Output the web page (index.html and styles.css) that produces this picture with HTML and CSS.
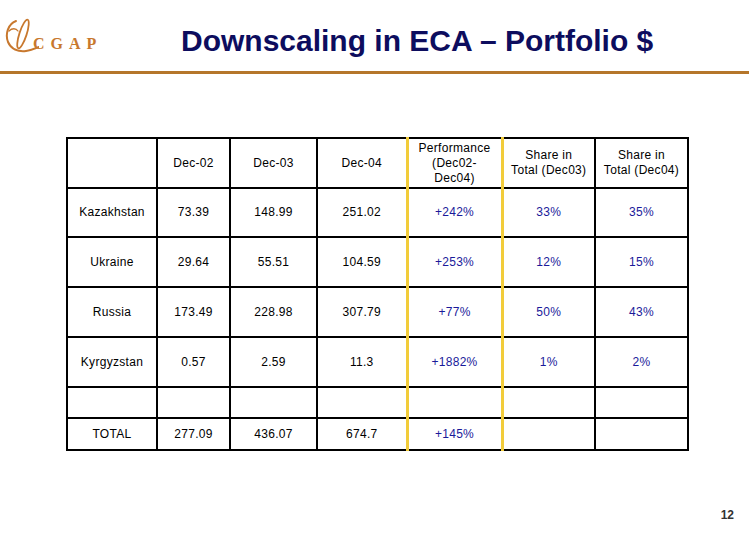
FILE: index.html
```html
<!DOCTYPE html>
<html>
<head>
<meta charset="utf-8">
<link rel="stylesheet" href="styles.css">
</head>
<body>
<div class="slide">
  <header class="header">
    <div class="logo">
      <svg class="logo-mark" width="34" height="36" viewBox="0 0 34 36">
        <path d="M11 4 C3 7 0 17 3 25 C6 32 13 35 21 34 C25 33.5 29 32 34 30" fill="none" stroke="#c8782e" stroke-width="2" stroke-linecap="round"/>
        <ellipse cx="18" cy="17" rx="3.6" ry="15" transform="rotate(18 18 17)" fill="none" stroke="#c8782e" stroke-width="1.8"/>
        <path d="M4 14 C7 11 11 11 13 14" fill="none" stroke="#c8782e" stroke-width="1.3" stroke-linecap="round"/>
      </svg>
      <span class="logo-text">CGAP</span>
    </div>
    <h1 class="title">Downscaling in ECA – Portfolio $</h1>
  </header>
  <div class="rule"></div>
  <main class="content">
    <table class="data">
      <colgroup>
        <col class="c1"><col class="c2"><col class="c3"><col class="c4"><col class="c5"><col class="c6"><col class="c7">
      </colgroup>
      <tr class="head">
        <td></td><td>Dec-02</td><td>Dec-03</td><td>Dec-04</td>
        <td class="perf">Performance<br>(Dec02-<br>Dec04)</td>
        <td class="after">Share in<br>Total (Dec03)</td>
        <td>Share in<br>Total (Dec04)</td>
      </tr>
      <tr class="row first">
        <td>Kazakhstan</td><td>73.39</td><td>148.99</td><td>251.02</td>
        <td class="perf blue">+242%</td><td class="after blue">33%</td><td class="blue">35%</td>
      </tr>
      <tr class="row">
        <td>Ukraine</td><td>29.64</td><td>55.51</td><td>104.59</td>
        <td class="perf blue">+253%</td><td class="after blue">12%</td><td class="blue">15%</td>
      </tr>
      <tr class="row">
        <td>Russia</td><td>173.49</td><td>228.98</td><td>307.79</td>
        <td class="perf blue">+77%</td><td class="after blue">50%</td><td class="blue">43%</td>
      </tr>
      <tr class="row">
        <td>Kyrgyzstan</td><td>0.57</td><td>2.59</td><td>11.3</td>
        <td class="perf blue">+1882%</td><td class="after blue">1%</td><td class="blue">2%</td>
      </tr>
      <tr class="empty">
        <td></td><td></td><td></td><td></td>
        <td class="perf"></td><td class="after"></td><td></td>
      </tr>
      <tr class="total">
        <td>TOTAL</td><td>277.09</td><td>436.07</td><td>674.7</td>
        <td class="perf blue">+145%</td><td class="after"></td><td></td>
      </tr>
    </table>
  </main>
  <footer class="footer"><span class="page">12</span></footer>
</div>
</body>
</html>
```
FILE: styles.css
```css
html, body {
  margin: 0;
  padding: 0;
  background: #ffffff;
}
.slide {
  width: 749px;
  height: 540px;
  font-family: "Liberation Sans", Arial, sans-serif;
  display: flex;
  flex-direction: column;
}
.header {
  height: 71px;
  display: flex;
  align-items: flex-start;
}
.logo {
  width: 181px;
  flex: none;
  display: flex;
  align-items: flex-end;
  padding-top: 17px;
  padding-left: 5px;
  box-sizing: border-box;
}
.logo-mark {
  display: block;
}
.logo-text {
  font-family: "Liberation Serif", "Times New Roman", serif;
  font-weight: bold;
  font-size: 16px;
  letter-spacing: 6px;
  color: #c8782e;
  margin-left: -6px;
  line-height: 1;
  padding-bottom: 1px;
}
.title {
  margin: 24px 0 0 0;
  font-size: 30px;
  font-weight: bold;
  color: #0d0d5e;
  line-height: 34px;
  white-space: nowrap;
}
.rule {
  height: 3px;
  background: #b5762a;
}
.content {
  padding: 63px 0 0 66px;
  flex: 1;
}
.data {
  border-collapse: collapse;
  table-layout: fixed;
  font-size: 12px;
  letter-spacing: 0.3px;
  color: #000;
}
.c1 { width: 90px; }
.c2 { width: 73px; }
.c3 { width: 87px; }
.c4 { width: 90px; }
.c5 { width: 95px; }
.c6 { width: 93px; }
.c7 { width: 93px; }
.data td {
  border: 2px solid #000;
  text-align: center;
  vertical-align: middle;
  padding: 0 2px;
  line-height: 15px;
}
.data td.perf {
  border-left: 3px solid #f2cc3a;
}
.data td.after {
  border-left: 3px solid #f2cc3a;
}
.head td { height: 48px; }
.row td { height: 48px; }
.row.first td { height: 47px; }
.empty td { height: 29px; }
.total td { height: 30px; }
.blue { color: #1a1a9a; }
.footer {
  height: 32px;
  display: flex;
  justify-content: flex-end;
  align-items: flex-start;
  padding-right: 15px;
}
.page {
  font-size: 12px;
  font-weight: bold;
  color: #333;
}
```
